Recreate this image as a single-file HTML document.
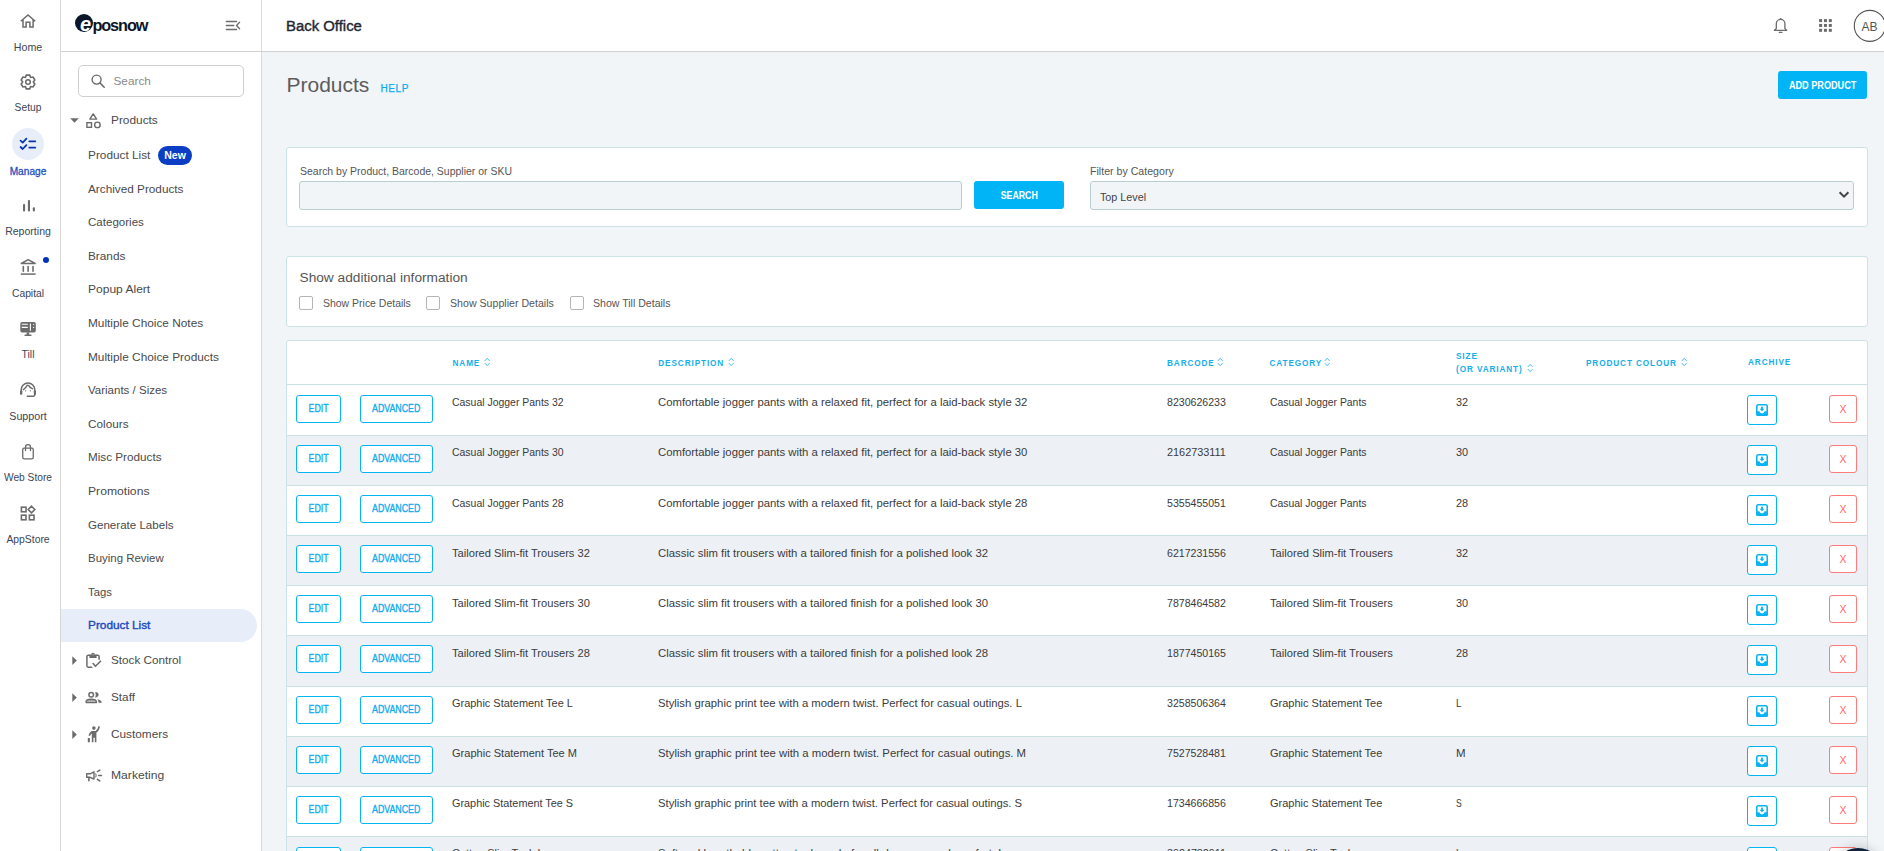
<!DOCTYPE html>
<html><head><meta charset="utf-8"><title>Back Office - Products</title>
<style>
*{box-sizing:border-box;margin:0;padding:0}
html,body{width:1884px;height:851px;overflow:hidden}
body{font-family:"Liberation Sans",sans-serif;background:#f2f5f8;position:relative;color:#333}
.a{position:absolute;white-space:nowrap}
#rail{position:absolute;left:0;top:0;width:61px;height:851px;background:#fff;border-right:1px solid #d6d6d6}
#side{position:absolute;left:61px;top:0;width:201px;height:851px;background:#fff;border-right:1px solid #dadada}
#hdr{position:absolute;left:61px;top:51px;width:1823px;height:1px;background:#d2d2d2}
#hdrw{position:absolute;left:262px;top:0;width:1622px;height:51px;background:#fff}
.rl{font-size:10.5px;color:#3a4556;width:56px;text-align:center;left:0;line-height:12px;transform-origin:50% 0}
.si{font-size:11px;color:#4a4a4a;left:88px;line-height:14px;transform-origin:0 0}
.panel{position:absolute;background:#fff;border:1px solid #cde2e4;border-radius:3px}
.th{font-size:8.2px;font-weight:bold;color:#14aeea;letter-spacing:0.9px;line-height:10px}
.td{font-size:11px;color:#3b3b3b;line-height:12px;transform-origin:0 0}
.lb{font-size:10.5px;color:#555;line-height:12px;transform-origin:0 0}
.btn{position:absolute;border:1px solid #05b4f3;border-radius:3px;background:#fff;color:#10aaf0;text-align:center}
.btn span{display:inline-block;font-size:11px;line-height:24px;transform:scaleX(.8);-webkit-text-stroke:0.35px #10aaf0}
.xb{position:absolute;border:1px solid #ff7b7b;border-radius:3px;background:#fff;color:#ff6767;font-size:10.5px;text-align:center;line-height:26px}
.row{position:absolute;left:287px;width:1580px;border-bottom:1px solid #c9e1e3}
.cb{position:absolute;width:14px;height:14px;border:1px solid #b5b5b5;border-radius:2px;background:#fff}
.sort{position:absolute;width:6px;height:9px}
</style></head>
<body>
<div id="rail"></div>
<div class="a" style="left:12px;top:128px;width:32px;height:32px;border-radius:50%;background:#e8eef9"></div>
<div class="a rl" style="top:41.1px;transform:scaleX(1.0115)">Home</div>
<div class="a rl" style="top:101.4px;transform:scaleX(0.9766)">Setup</div>
<div class="a rl" style="top:164.6px;color:#1f4fc1;-webkit-text-stroke:0.3px #1f4fc1;transform:scaleX(0.9654)">Manage</div>
<div class="a rl" style="top:225.2px;transform:scaleX(1.0042)">Reporting</div>
<div class="a rl" style="top:287.0px;transform:scaleX(0.9836)">Capital</div>
<div class="a rl" style="top:347.6px;transform:scaleX(0.9944)">Till</div>
<div class="a rl" style="top:410.3px;transform:scaleX(1.0180)">Support</div>
<div class="a rl" style="top:471.2px;transform:scaleX(0.9731)">Web Store</div>
<div class="a rl" style="top:532.8px;transform:scaleX(0.9876)">AppStore</div>
<svg class="a" style="left:0px;top:0px" width="60" height="560" viewBox="0 0 60 560"><path d="M20.8,21.2 L28,14.9 L35.2,21.2 M23,19.5 V27 H26.1 V22.2 H29.9 V27 H33.1 V19.5" fill="none" stroke="#6b6b6b" stroke-width="1.5" stroke-linejoin="miter"/><path d="M30.60,77.38 L29.70,75.11 L26.30,75.11 L25.40,77.38 L25.30,77.44 L22.88,77.08 L21.18,80.03 L22.70,81.94 L22.70,82.06 L21.18,83.97 L22.88,86.92 L25.30,86.56 L25.40,86.62 L26.30,88.89 L29.70,88.89 L30.60,86.62 L30.70,86.56 L33.12,86.92 L34.82,83.97 L33.30,82.06 L33.30,81.94 L34.82,80.03 L33.12,77.08 L30.70,77.44Z" fill="none" stroke="#6b6b6b" stroke-width="1.6" stroke-linejoin="miter"/><circle cx="28" cy="82" r="2.3" fill="none" stroke="#6b6b6b" stroke-width="1.5"/><path d="M20.6,140.7 L22.7,142.6 L26.4,138.7 M20.6,147 L22.7,149 L26.4,145.1" fill="none" stroke="#0a34b0" stroke-width="1.8" stroke-linecap="round" stroke-linejoin="round"/><path d="M29.3,141.3 H35.3 M29.3,147.6 H35.3" fill="none" stroke="#0a34b0" stroke-width="1.8" stroke-linecap="round"/><rect x="23" y="204" width="2.1" height="7.5" rx="0.9" fill="#6b6b6b"/><rect x="27.9" y="200.1" width="2.1" height="11.4" rx="0.9" fill="#6b6b6b"/><rect x="32.8" y="207.3" width="2.1" height="4.2" rx="0.9" fill="#6b6b6b"/><path d="M21.3,263.5 L28.2,259.7 L35.1,263.5 Z" fill="none" stroke="#6b6b6b" stroke-width="1.5" stroke-linejoin="round"/><path d="M23.3,266.6 V271.2 M28.1,266.6 V271.2 M33,266.6 V271.2" fill="none" stroke="#6b6b6b" stroke-width="1.6" stroke-linecap="round"/><path d="M20.8,274.1 H35.6" fill="none" stroke="#6b6b6b" stroke-width="1.5"/><circle cx="46" cy="260" r="3" fill="#0033b8"/><rect x="20.3" y="321.9" width="15.5" height="10.7" rx="1.8" fill="#6b6b6b"/><path d="M21.8,324.3 H27.8 M21.8,327.4 H27.8 M30.4,323.6 V330.8" stroke="#fff" stroke-width="1.1"/><circle cx="33.6" cy="324.3" r="0.6" fill="#fff"/><circle cx="33.6" cy="327.4" r="0.6" fill="#fff"/><rect x="26.6" y="332.4" width="2.6" height="2.5" fill="#6b6b6b"/><rect x="24.4" y="334.6" width="7.2" height="1.3" rx="0.6" fill="#6b6b6b"/><path d="M21.2,391 V389.9 A6.8,6.8 0 0 1 34.8,389.9 V394.8 Q34.8,396.2 33.4,396.2 H27.4" fill="none" stroke="#6b6b6b" stroke-width="1.5" stroke-linecap="round"/><rect x="20" y="390.4" width="2.3" height="4.3" rx="0.8" fill="#6b6b6b"/><rect x="33.8" y="390.4" width="2.2" height="4.3" rx="0.8" fill="#6b6b6b"/><path d="M23.4,389.6 Q25.6,388.4 27.3,385.2 M28.6,385.4 Q29.8,387.9 32.4,388.7" fill="none" stroke="#6b6b6b" stroke-width="1.4" stroke-linecap="round"/><circle cx="25.6" cy="390.8" r="0.65" fill="#6b6b6b"/><circle cx="30.4" cy="390.8" r="0.65" fill="#6b6b6b"/><rect x="22.75" y="448.2" width="10.5" height="10.7" rx="1.3" fill="none" stroke="#6b6b6b" stroke-width="1.3"/><path d="M25.5,450.6 V447.2 A2.5,2.5 0 0 1 30.5,447.2 V450.6" fill="none" stroke="#6b6b6b" stroke-width="1.3" stroke-linecap="round"/><rect x="21.4" y="507.2" width="4.6" height="4.6" fill="none" stroke="#6b6b6b" stroke-width="1.6"/><rect x="21.4" y="515.2" width="4.6" height="4.6" fill="none" stroke="#6b6b6b" stroke-width="1.6"/><rect x="29.4" y="515.2" width="4.6" height="4.6" fill="none" stroke="#6b6b6b" stroke-width="1.6"/><path d="M31.5,506.2 L34.8,509.5 L31.5,512.8 L28.2,509.5 Z" fill="none" stroke="#6b6b6b" stroke-width="1.6" stroke-linejoin="miter"/></svg>
<div id="side"></div>
<div id="hdrw"></div><div id="hdr"></div>
<div class="a" style="left:74.6px;top:13.9px;width:18.6px;height:18.6px;border-radius:50%;background:#0b1628"></div>
<div class="a" style="left:80px;top:13.6px;font-size:20px;font-weight:bold;font-style:italic;color:#fff;line-height:20px">e</div>
<div class="a" style="left:92.4px;top:15.2px;font-size:16.3px;font-weight:bold;color:#0b1628;letter-spacing:-1.1px;line-height:20px">posnow</div>
<div class="a si" style="top:148.4px;transform:scaleX(1.0743)">Product List</div>
<div class="a si" style="top:182.0px;transform:scaleX(1.0698)">Archived Products</div>
<div class="a si" style="top:214.9px;transform:scaleX(1.0501)">Categories</div>
<div class="a si" style="top:249.0px;transform:scaleX(1.0732)">Brands</div>
<div class="a si" style="top:281.9px;transform:scaleX(1.0934)">Popup Alert</div>
<div class="a si" style="top:316.0px;transform:scaleX(1.0764)">Multiple Choice Notes</div>
<div class="a si" style="top:349.6px;transform:scaleX(1.0761)">Multiple Choice Products</div>
<div class="a si" style="top:383.2px;transform:scaleX(1.0461)">Variants / Sizes</div>
<div class="a si" style="top:416.8px;transform:scaleX(1.0686)">Colours</div>
<div class="a si" style="top:450.4px;transform:scaleX(1.0640)">Misc Products</div>
<div class="a si" style="top:484.0px;transform:scaleX(1.1048)">Promotions</div>
<div class="a si" style="top:517.6px;transform:scaleX(1.0514)">Generate Labels</div>
<div class="a si" style="top:551.2px;transform:scaleX(1.0403)">Buying Review</div>
<div class="a si" style="top:585.0px;transform:scaleX(1.0278)">Tags</div>
<div class="a" style="left:158px;top:146px;width:34px;height:19px;border-radius:10px;background:#0b3ec4;color:#fff;font-size:10.5px;font-weight:bold;text-align:center;line-height:19px">New</div>
<div class="a" style="left:61px;top:609px;width:196px;height:33px;border-radius:0 17px 17px 0;background:#e8eef9"></div>
<div class="a si" style="top:617.9px;color:#1a48c0;-webkit-text-stroke:0.35px #1a48c0;transform:scaleX(1.0743)">Product List</div>
<div class="a si" style="left:110.5px;top:113.0px;transform:scaleX(1.0776)">Products</div>
<div class="a si" style="left:110.5px;top:653.4px;transform:scaleX(1.0632)">Stock Control</div>
<div class="a si" style="left:110.5px;top:690.0px;transform:scaleX(1.0694)">Staff</div>
<div class="a si" style="left:110.5px;top:727.0px;transform:scaleX(1.0723)">Customers</div>
<div class="a si" style="left:110.5px;top:768.4px;transform:scaleX(1.1025)">Marketing</div>
<div class="a" style="left:78px;top:65px;width:166px;height:32px;border:1px solid #cfcfcf;border-radius:5px;background:#fff"></div>
<div class="a" style="left:113.5px;top:74px;font-size:11.8px;line-height:14px;color:#8a8a8a">Search</div>
<svg class="a" style="left:0px;top:0px" width="262" height="800" viewBox="0 0 262 800"><path d="M70.2,118.3 H78.8 L74.5,122.7 Z" fill="#6b6b6b"/><path d="M72.3,656.2 V665.0 L76.8,660.6 Z" fill="#6b6b6b"/><path d="M72.3,693.2 V702.0 L76.8,697.6 Z" fill="#6b6b6b"/><path d="M72.3,730.2 V739.0 L76.8,734.6 Z" fill="#6b6b6b"/><path d="M93.2,113.9 L96.6,119.1 H89.8 Z" fill="none" stroke="#6b6b6b" stroke-width="1.4" stroke-linejoin="round"/><rect x="86.9" y="122.7" width="4.6" height="4.6" fill="none" stroke="#6b6b6b" stroke-width="1.4"/><circle cx="97.4" cy="124.9" r="2.75" fill="none" stroke="#6b6b6b" stroke-width="1.4"/><path d="M91.7,667.2 H88.3 Q86.9,667.2 86.9,665.8 V656.6 Q86.9,655.2 88.3,655.2 H89.6 M96.4,655.2 H97.7 Q99.1,655.2 99.1,656.6 V659.3" fill="none" stroke="#6b6b6b" stroke-width="1.5" stroke-linecap="round"/><path d="M89.4,657.9 V654.6 H91.2 A1.8,1.8 0 0 1 94.8,654.6 H96.6 V657.9 Z" fill="#6b6b6b"/><circle cx="93" cy="654.7" r="0.6" fill="#ccc"/><path d="M93.1,663.5 L95.5,666.2 L100.5,661.2" fill="none" stroke="#6b6b6b" stroke-width="1.6" stroke-linecap="round"/><circle cx="91.2" cy="694.7" r="2.3" fill="none" stroke="#6b6b6b" stroke-width="1.5"/><path d="M95.2,692 Q98.6,692.4 98.6,694.7 Q98.6,697 95.2,697.4 Q96.3,694.7 95.2,692 Z" fill="#6b6b6b"/><path d="M86.1,702.6 V701.6 Q86.3,699.4 91.2,699.3 Q96.1,699.4 96.4,701.6 V702.6 Z" fill="#b8b8b8" stroke="#6b6b6b" stroke-width="1.4" stroke-linejoin="round"/><path d="M97.3,699.2 Q101.6,699.9 101.8,702.8 H98.6 Q98.6,700.6 97.3,699.2 Z" fill="#6b6b6b"/><circle cx="93.9" cy="728.1" r="1.8" fill="#6b6b6b"/><path d="M91.6,730.9 H95.6 Q97.6,730 98.5,726 L99.9,726.4 Q99.1,731 96.4,732.6 V742.2 H94.8 V737.7 H93.4 V742.2 H91.8 V733.6 Q90.6,734.4 89.9,736 L88.5,735.6 Q89.3,732 91.6,730.9 Z" fill="#6b6b6b"/><rect x="87.8" y="738" width="2.1" height="4.3" rx="0.5" fill="#6b6b6b"/><path d="M86.7,773.8 H90.1 L94,771.8 V779 L90.1,777.3 H86.7 Z" fill="none" stroke="#6b6b6b" stroke-width="1.4" stroke-linejoin="round"/><path d="M88.9,777.6 V780.8" stroke="#6b6b6b" stroke-width="1.6" stroke-linecap="round"/><path d="M95.3,773.4 Q97.1,775.4 95.3,777.4" fill="none" stroke="#999" stroke-width="1.3"/><path d="M97.4,771.6 L99.8,770.1 M98.7,775.5 H101.5 M97.4,779.4 L99.8,780.9" stroke="#6b6b6b" stroke-width="1.5" stroke-linecap="round"/><path d="M226.3,21.5 H236.6 M226.3,25.5 H233.8 M226.3,29.5 H236.6 M239.6,22.3 L236.5,25.5 L239.6,28.7" fill="none" stroke="#6b6b6b" stroke-width="1.3" stroke-linecap="round" stroke-linejoin="round"/><circle cx="96.6" cy="79.6" r="4.5" fill="none" stroke="#6b6b6b" stroke-width="1.4"/><path d="M99.9,82.9 L104.2,87.2" stroke="#6b6b6b" stroke-width="1.5" stroke-linecap="round"/></svg>
<div class="a" style="left:286px;top:17px;font-size:14.9px;color:#1f2733;line-height:18px;-webkit-text-stroke:0.4px #1f2733">Back Office</div>
<svg class="a" style="left:1700px;top:0px" width="184" height="52" viewBox="1700 0 184 52"><path d="M1774.4,30.3 H1786.7 L1784.9,28.6 V23.7 A4.3,4.3 0 0 0 1776.3,23.7 V28.6 Z" fill="none" stroke="#6b6b6b" stroke-width="1.3" stroke-linejoin="round"/><circle cx="1780.6" cy="18.9" r="1" fill="#6b6b6b"/><path d="M1779.2,32.3 H1782" stroke="#6b6b6b" stroke-width="1.2" stroke-linecap="round"/><rect x="1819.10" y="19.10" width="3" height="3" fill="#6b6b6b"/><rect x="1819.10" y="23.95" width="3" height="3" fill="#6b6b6b"/><rect x="1819.10" y="28.80" width="3" height="3" fill="#6b6b6b"/><rect x="1823.95" y="19.10" width="3" height="3" fill="#6b6b6b"/><rect x="1823.95" y="23.95" width="3" height="3" fill="#6b6b6b"/><rect x="1823.95" y="28.80" width="3" height="3" fill="#6b6b6b"/><rect x="1828.80" y="19.10" width="3" height="3" fill="#6b6b6b"/><rect x="1828.80" y="23.95" width="3" height="3" fill="#6b6b6b"/><rect x="1828.80" y="28.80" width="3" height="3" fill="#6b6b6b"/><circle cx="1869.8" cy="25.9" r="15.5" fill="none" stroke="#555" stroke-width="1.1"/></svg>
<div class="a" style="left:1861.5px;top:20px;font-size:12px;color:#555;line-height:14px">AB</div>
<div class="a" style="left:286.5px;top:72.5px;font-size:21px;color:#5c5c5c;line-height:24px">Products</div>
<div class="a" style="left:380.5px;top:82.5px;font-size:10px;color:#08aeef;line-height:12px;letter-spacing:0.6px;-webkit-text-stroke:0.25px #08aeef">HELP</div>
<div class="a" style="left:1778px;top:71px;width:89px;height:28px;border-radius:3px;background:#00b4f6;color:#fff;text-align:center"><span style="display:inline-block;font-size:11px;font-weight:bold;line-height:28px;transform:scaleX(.83)">ADD PRODUCT</span></div>
<div class="panel" style="left:286px;top:147px;width:1582px;height:80px"></div>
<div class="a lb" style="left:299.5px;top:165.2px;transform:scaleX(0.9979)">Search by Product, Barcode, Supplier or SKU</div>
<div class="a" style="left:299px;top:181px;width:663px;height:29px;border:1px solid #b7cfd1;border-radius:3px;background:#f2f5f8"></div>
<div class="a" style="left:974px;top:181px;width:90px;height:28px;border-radius:3px;background:#00b4f6;color:#fff;text-align:center"><span style="display:inline-block;font-size:11px;font-weight:bold;line-height:28px;transform:scaleX(.8)">SEARCH</span></div>
<div class="a lb" style="left:1089.5px;top:165.2px;transform:scaleX(1.0110)">Filter by Category</div>
<div class="a" style="left:1090px;top:181px;width:764px;height:29px;border:1px solid #b7cfd1;border-radius:3px;background:#f2f5f8"></div>
<div class="a lb" style="left:1100px;top:190.6px;color:#444;transform:scaleX(1.0238)">Top Level</div>
<svg class="a" style="left:1838px;top:190px" width="12" height="10" viewBox="0 0 12 10"><path d="M1.6,2.2 L6,6.6 L10.4,2.2" fill="none" stroke="#444" stroke-width="2"/></svg>
<div class="panel" style="left:286px;top:256px;width:1582px;height:71px"></div>
<div class="a" style="left:299.5px;top:270px;font-size:13.7px;color:#555;line-height:16px">Show additional information</div>
<div class="cb" style="left:299px;top:296px"></div>
<div class="a lb" style="left:322.5px;top:297px;transform:scaleX(0.9969)">Show Price Details</div>
<div class="cb" style="left:426px;top:296px"></div>
<div class="a lb" style="left:449.5px;top:297px;transform:scaleX(1.0108)">Show Supplier Details</div>
<div class="cb" style="left:570px;top:296px"></div>
<div class="a lb" style="left:593px;top:297px;transform:scaleX(1.0061)">Show Till Details</div>
<div class="panel" style="left:286px;top:340px;width:1582px;height:600px;border-radius:3px 3px 0 0"></div>
<div class="a" style="left:287px;top:384px;width:1580px;height:1px;background:#c9e1e3"></div>
<div class="a th" style="left:452.5px;top:359px">NAME</div>
<svg class="a" style="left:484px;top:357.2px" width="7" height="10" viewBox="0 0 7 10"><path d="M1.1,3.6 L3.2,1.4 L5.3,3.6 M1.1,6.4 L3.2,8.6 L5.3,6.4" fill="none" stroke="#2eb8ee" stroke-width="0.95" stroke-linecap="round" stroke-linejoin="round"/></svg>
<div class="a th" style="left:658.3px;top:359px">DESCRIPTION</div>
<svg class="a" style="left:727.9px;top:357.2px" width="7" height="10" viewBox="0 0 7 10"><path d="M1.1,3.6 L3.2,1.4 L5.3,3.6 M1.1,6.4 L3.2,8.6 L5.3,6.4" fill="none" stroke="#2eb8ee" stroke-width="0.95" stroke-linecap="round" stroke-linejoin="round"/></svg>
<div class="a th" style="left:1167px;top:359px">BARCODE</div>
<svg class="a" style="left:1217.2px;top:357.2px" width="7" height="10" viewBox="0 0 7 10"><path d="M1.1,3.6 L3.2,1.4 L5.3,3.6 M1.1,6.4 L3.2,8.6 L5.3,6.4" fill="none" stroke="#2eb8ee" stroke-width="0.95" stroke-linecap="round" stroke-linejoin="round"/></svg>
<div class="a th" style="left:1269.5px;top:359px">CATEGORY</div>
<svg class="a" style="left:1323.6px;top:357.2px" width="7" height="10" viewBox="0 0 7 10"><path d="M1.1,3.6 L3.2,1.4 L5.3,3.6 M1.1,6.4 L3.2,8.6 L5.3,6.4" fill="none" stroke="#2eb8ee" stroke-width="0.95" stroke-linecap="round" stroke-linejoin="round"/></svg>
<div class="a th" style="left:1586px;top:359px">PRODUCT COLOUR</div>
<svg class="a" style="left:1681.2px;top:357.2px" width="7" height="10" viewBox="0 0 7 10"><path d="M1.1,3.6 L3.2,1.4 L5.3,3.6 M1.1,6.4 L3.2,8.6 L5.3,6.4" fill="none" stroke="#2eb8ee" stroke-width="0.95" stroke-linecap="round" stroke-linejoin="round"/></svg>
<div class="a th" style="left:1456px;top:352px">SIZE</div>
<div class="a th" style="left:1456px;top:365px">(OR VARIANT)</div>
<svg class="a" style="left:1527px;top:363px" width="7" height="10" viewBox="0 0 7 10"><path d="M1.1,3.6 L3.2,1.4 L5.3,3.6 M1.1,6.4 L3.2,8.6 L5.3,6.4" fill="none" stroke="#2eb8ee" stroke-width="0.95" stroke-linecap="round" stroke-linejoin="round"/></svg>
<div class="a th" style="left:1748px;top:358px">ARCHIVE</div>
<div class="row" style="top:385px;height:51px;background:#fff"></div>
<div class="btn" style="left:296px;top:395px;width:45px;height:28px"><span>EDIT</span></div>
<div class="btn" style="left:360px;top:395px;width:73px;height:28px"><span>ADVANCED</span></div>
<div class="a td" style="left:452px;top:396.30px;transform:scaleX(0.9505)">Casual Jogger Pants 32</div>
<div class="a td" style="left:658px;top:396.30px;transform:scaleX(1.0293)">Comfortable jogger pants with a relaxed fit, perfect for a laid-back style 32</div>
<div class="a td" style="left:1167px;top:396.30px;transform:scaleX(0.9627)">8230626233</div>
<div class="a td" style="left:1269.5px;top:396.30px;transform:scaleX(0.9448)">Casual Jogger Pants</div>
<div class="a td" style="left:1456px;top:396.30px;transform:scaleX(0.9907)">32</div>
<div class="btn" style="left:1747px;top:395px;width:30px;height:30px"><svg width="12" height="12" viewBox="0 0 11.4 11.4" style="position:absolute;left:8.3px;top:8.3px"><rect x="0.75" y="0.75" width="9.9" height="9.9" rx="1.4" fill="none" stroke="#0bb3f2" stroke-width="1.5"/><path fill="#0bb3f2" d="M0,7 H3.2 Q3.5,9 5.7,9 Q7.9,9 8.2,7 H11.4 V10 Q11.4,11.4 10,11.4 H1.4 Q0,11.4 0,10 Z"/><rect x="4.85" y="2.5" width="1.7" height="2.4" fill="#0bb3f2"/><path fill="#0bb3f2" d="M3.3,4.5 H8.1 L5.7,7 Z"/></svg></div>
<div class="xb" style="left:1829px;top:395px;width:28px;height:28px">X</div>
<div class="row" style="top:436px;height:50px;background:#edf1f5"></div>
<div class="btn" style="left:296px;top:445px;width:45px;height:28px"><span>EDIT</span></div>
<div class="btn" style="left:360px;top:445px;width:73px;height:28px"><span>ADVANCED</span></div>
<div class="a td" style="left:452px;top:446.43px;transform:scaleX(0.9505)">Casual Jogger Pants 30</div>
<div class="a td" style="left:658px;top:446.43px;transform:scaleX(1.0293)">Comfortable jogger pants with a relaxed fit, perfect for a laid-back style 30</div>
<div class="a td" style="left:1167px;top:446.43px;transform:scaleX(0.9891)">2162733111</div>
<div class="a td" style="left:1269.5px;top:446.43px;transform:scaleX(0.9448)">Casual Jogger Pants</div>
<div class="a td" style="left:1456px;top:446.43px;transform:scaleX(0.9907)">30</div>
<div class="btn" style="left:1747px;top:445px;width:30px;height:30px"><svg width="12" height="12" viewBox="0 0 11.4 11.4" style="position:absolute;left:8.3px;top:8.3px"><rect x="0.75" y="0.75" width="9.9" height="9.9" rx="1.4" fill="none" stroke="#0bb3f2" stroke-width="1.5"/><path fill="#0bb3f2" d="M0,7 H3.2 Q3.5,9 5.7,9 Q7.9,9 8.2,7 H11.4 V10 Q11.4,11.4 10,11.4 H1.4 Q0,11.4 0,10 Z"/><rect x="4.85" y="2.5" width="1.7" height="2.4" fill="#0bb3f2"/><path fill="#0bb3f2" d="M3.3,4.5 H8.1 L5.7,7 Z"/></svg></div>
<div class="xb" style="left:1829px;top:445px;width:28px;height:28px">X</div>
<div class="row" style="top:486px;height:50px;background:#fff"></div>
<div class="btn" style="left:296px;top:495px;width:45px;height:28px"><span>EDIT</span></div>
<div class="btn" style="left:360px;top:495px;width:73px;height:28px"><span>ADVANCED</span></div>
<div class="a td" style="left:452px;top:496.55px;transform:scaleX(0.9505)">Casual Jogger Pants 28</div>
<div class="a td" style="left:658px;top:496.55px;transform:scaleX(1.0293)">Comfortable jogger pants with a relaxed fit, perfect for a laid-back style 28</div>
<div class="a td" style="left:1167px;top:496.55px;transform:scaleX(0.9627)">5355455051</div>
<div class="a td" style="left:1269.5px;top:496.55px;transform:scaleX(0.9448)">Casual Jogger Pants</div>
<div class="a td" style="left:1456px;top:496.55px;transform:scaleX(0.9907)">28</div>
<div class="btn" style="left:1747px;top:495px;width:30px;height:30px"><svg width="12" height="12" viewBox="0 0 11.4 11.4" style="position:absolute;left:8.3px;top:8.3px"><rect x="0.75" y="0.75" width="9.9" height="9.9" rx="1.4" fill="none" stroke="#0bb3f2" stroke-width="1.5"/><path fill="#0bb3f2" d="M0,7 H3.2 Q3.5,9 5.7,9 Q7.9,9 8.2,7 H11.4 V10 Q11.4,11.4 10,11.4 H1.4 Q0,11.4 0,10 Z"/><rect x="4.85" y="2.5" width="1.7" height="2.4" fill="#0bb3f2"/><path fill="#0bb3f2" d="M3.3,4.5 H8.1 L5.7,7 Z"/></svg></div>
<div class="xb" style="left:1829px;top:495px;width:28px;height:28px">X</div>
<div class="row" style="top:536px;height:50px;background:#edf1f5"></div>
<div class="btn" style="left:296px;top:545px;width:45px;height:28px"><span>EDIT</span></div>
<div class="btn" style="left:360px;top:545px;width:73px;height:28px"><span>ADVANCED</span></div>
<div class="a td" style="left:452px;top:546.67px;transform:scaleX(1.0116)">Tailored Slim-fit Trousers 32</div>
<div class="a td" style="left:658px;top:546.67px;transform:scaleX(1.0321)">Classic slim fit trousers with a tailored finish for a polished look 32</div>
<div class="a td" style="left:1167px;top:546.67px;transform:scaleX(0.9627)">6217231556</div>
<div class="a td" style="left:1269.5px;top:546.67px;transform:scaleX(1.0138)">Tailored Slim-fit Trousers</div>
<div class="a td" style="left:1456px;top:546.67px;transform:scaleX(0.9907)">32</div>
<div class="btn" style="left:1747px;top:545px;width:30px;height:30px"><svg width="12" height="12" viewBox="0 0 11.4 11.4" style="position:absolute;left:8.3px;top:8.3px"><rect x="0.75" y="0.75" width="9.9" height="9.9" rx="1.4" fill="none" stroke="#0bb3f2" stroke-width="1.5"/><path fill="#0bb3f2" d="M0,7 H3.2 Q3.5,9 5.7,9 Q7.9,9 8.2,7 H11.4 V10 Q11.4,11.4 10,11.4 H1.4 Q0,11.4 0,10 Z"/><rect x="4.85" y="2.5" width="1.7" height="2.4" fill="#0bb3f2"/><path fill="#0bb3f2" d="M3.3,4.5 H8.1 L5.7,7 Z"/></svg></div>
<div class="xb" style="left:1829px;top:545px;width:28px;height:28px">X</div>
<div class="row" style="top:586px;height:50px;background:#fff"></div>
<div class="btn" style="left:296px;top:595px;width:45px;height:28px"><span>EDIT</span></div>
<div class="btn" style="left:360px;top:595px;width:73px;height:28px"><span>ADVANCED</span></div>
<div class="a td" style="left:452px;top:596.80px;transform:scaleX(1.0116)">Tailored Slim-fit Trousers 30</div>
<div class="a td" style="left:658px;top:596.80px;transform:scaleX(1.0321)">Classic slim fit trousers with a tailored finish for a polished look 30</div>
<div class="a td" style="left:1167px;top:596.80px;transform:scaleX(0.9627)">7878464582</div>
<div class="a td" style="left:1269.5px;top:596.80px;transform:scaleX(1.0138)">Tailored Slim-fit Trousers</div>
<div class="a td" style="left:1456px;top:596.80px;transform:scaleX(0.9907)">30</div>
<div class="btn" style="left:1747px;top:595px;width:30px;height:30px"><svg width="12" height="12" viewBox="0 0 11.4 11.4" style="position:absolute;left:8.3px;top:8.3px"><rect x="0.75" y="0.75" width="9.9" height="9.9" rx="1.4" fill="none" stroke="#0bb3f2" stroke-width="1.5"/><path fill="#0bb3f2" d="M0,7 H3.2 Q3.5,9 5.7,9 Q7.9,9 8.2,7 H11.4 V10 Q11.4,11.4 10,11.4 H1.4 Q0,11.4 0,10 Z"/><rect x="4.85" y="2.5" width="1.7" height="2.4" fill="#0bb3f2"/><path fill="#0bb3f2" d="M3.3,4.5 H8.1 L5.7,7 Z"/></svg></div>
<div class="xb" style="left:1829px;top:595px;width:28px;height:28px">X</div>
<div class="row" style="top:636px;height:51px;background:#edf1f5"></div>
<div class="btn" style="left:296px;top:645px;width:45px;height:28px"><span>EDIT</span></div>
<div class="btn" style="left:360px;top:645px;width:73px;height:28px"><span>ADVANCED</span></div>
<div class="a td" style="left:452px;top:646.92px;transform:scaleX(1.0116)">Tailored Slim-fit Trousers 28</div>
<div class="a td" style="left:658px;top:646.92px;transform:scaleX(1.0321)">Classic slim fit trousers with a tailored finish for a polished look 28</div>
<div class="a td" style="left:1167px;top:646.92px;transform:scaleX(0.9627)">1877450165</div>
<div class="a td" style="left:1269.5px;top:646.92px;transform:scaleX(1.0138)">Tailored Slim-fit Trousers</div>
<div class="a td" style="left:1456px;top:646.92px;transform:scaleX(0.9907)">28</div>
<div class="btn" style="left:1747px;top:645px;width:30px;height:30px"><svg width="12" height="12" viewBox="0 0 11.4 11.4" style="position:absolute;left:8.3px;top:8.3px"><rect x="0.75" y="0.75" width="9.9" height="9.9" rx="1.4" fill="none" stroke="#0bb3f2" stroke-width="1.5"/><path fill="#0bb3f2" d="M0,7 H3.2 Q3.5,9 5.7,9 Q7.9,9 8.2,7 H11.4 V10 Q11.4,11.4 10,11.4 H1.4 Q0,11.4 0,10 Z"/><rect x="4.85" y="2.5" width="1.7" height="2.4" fill="#0bb3f2"/><path fill="#0bb3f2" d="M3.3,4.5 H8.1 L5.7,7 Z"/></svg></div>
<div class="xb" style="left:1829px;top:645px;width:28px;height:28px">X</div>
<div class="row" style="top:687px;height:50px;background:#fff"></div>
<div class="btn" style="left:296px;top:696px;width:45px;height:28px"><span>EDIT</span></div>
<div class="btn" style="left:360px;top:696px;width:73px;height:28px"><span>ADVANCED</span></div>
<div class="a td" style="left:452px;top:697.05px;transform:scaleX(0.9950)">Graphic Statement Tee L</div>
<div class="a td" style="left:658px;top:697.05px;transform:scaleX(1.0281)">Stylish graphic print tee with a modern twist. Perfect for casual outings. L</div>
<div class="a td" style="left:1167px;top:697.05px;transform:scaleX(0.9627)">3258506364</div>
<div class="a td" style="left:1269.5px;top:697.05px;transform:scaleX(1.0001)">Graphic Statement Tee</div>
<div class="a td" style="left:1456px;top:697.05px;transform:scaleX(0.8993)">L</div>
<div class="btn" style="left:1747px;top:696px;width:30px;height:30px"><svg width="12" height="12" viewBox="0 0 11.4 11.4" style="position:absolute;left:8.3px;top:8.3px"><rect x="0.75" y="0.75" width="9.9" height="9.9" rx="1.4" fill="none" stroke="#0bb3f2" stroke-width="1.5"/><path fill="#0bb3f2" d="M0,7 H3.2 Q3.5,9 5.7,9 Q7.9,9 8.2,7 H11.4 V10 Q11.4,11.4 10,11.4 H1.4 Q0,11.4 0,10 Z"/><rect x="4.85" y="2.5" width="1.7" height="2.4" fill="#0bb3f2"/><path fill="#0bb3f2" d="M3.3,4.5 H8.1 L5.7,7 Z"/></svg></div>
<div class="xb" style="left:1829px;top:696px;width:28px;height:28px">X</div>
<div class="row" style="top:737px;height:50px;background:#edf1f5"></div>
<div class="btn" style="left:296px;top:746px;width:45px;height:28px"><span>EDIT</span></div>
<div class="btn" style="left:360px;top:746px;width:73px;height:28px"><span>ADVANCED</span></div>
<div class="a td" style="left:452px;top:747.17px;transform:scaleX(1.0033)">Graphic Statement Tee M</div>
<div class="a td" style="left:658px;top:747.17px;transform:scaleX(1.0308)">Stylish graphic print tee with a modern twist. Perfect for casual outings. M</div>
<div class="a td" style="left:1167px;top:747.17px;transform:scaleX(0.9627)">7527528481</div>
<div class="a td" style="left:1269.5px;top:747.17px;transform:scaleX(1.0001)">Graphic Statement Tee</div>
<div class="a td" style="left:1456px;top:747.17px;transform:scaleX(1.0444)">M</div>
<div class="btn" style="left:1747px;top:746px;width:30px;height:30px"><svg width="12" height="12" viewBox="0 0 11.4 11.4" style="position:absolute;left:8.3px;top:8.3px"><rect x="0.75" y="0.75" width="9.9" height="9.9" rx="1.4" fill="none" stroke="#0bb3f2" stroke-width="1.5"/><path fill="#0bb3f2" d="M0,7 H3.2 Q3.5,9 5.7,9 Q7.9,9 8.2,7 H11.4 V10 Q11.4,11.4 10,11.4 H1.4 Q0,11.4 0,10 Z"/><rect x="4.85" y="2.5" width="1.7" height="2.4" fill="#0bb3f2"/><path fill="#0bb3f2" d="M3.3,4.5 H8.1 L5.7,7 Z"/></svg></div>
<div class="xb" style="left:1829px;top:746px;width:28px;height:28px">X</div>
<div class="row" style="top:787px;height:50px;background:#fff"></div>
<div class="btn" style="left:296px;top:796px;width:45px;height:28px"><span>EDIT</span></div>
<div class="btn" style="left:360px;top:796px;width:73px;height:28px"><span>ADVANCED</span></div>
<div class="a td" style="left:452px;top:797.30px;transform:scaleX(0.9869)">Graphic Statement Tee S</div>
<div class="a td" style="left:658px;top:797.30px;transform:scaleX(1.0251)">Stylish graphic print tee with a modern twist. Perfect for casual outings. S</div>
<div class="a td" style="left:1167px;top:797.30px;transform:scaleX(0.9627)">1734666856</div>
<div class="a td" style="left:1269.5px;top:797.30px;transform:scaleX(1.0001)">Graphic Statement Tee</div>
<div class="a td" style="left:1456px;top:797.30px;transform:scaleX(0.7788)">S</div>
<div class="btn" style="left:1747px;top:796px;width:30px;height:30px"><svg width="12" height="12" viewBox="0 0 11.4 11.4" style="position:absolute;left:8.3px;top:8.3px"><rect x="0.75" y="0.75" width="9.9" height="9.9" rx="1.4" fill="none" stroke="#0bb3f2" stroke-width="1.5"/><path fill="#0bb3f2" d="M0,7 H3.2 Q3.5,9 5.7,9 Q7.9,9 8.2,7 H11.4 V10 Q11.4,11.4 10,11.4 H1.4 Q0,11.4 0,10 Z"/><rect x="4.85" y="2.5" width="1.7" height="2.4" fill="#0bb3f2"/><path fill="#0bb3f2" d="M3.3,4.5 H8.1 L5.7,7 Z"/></svg></div>
<div class="xb" style="left:1829px;top:796px;width:28px;height:28px">X</div>
<div class="row" style="top:837px;height:50px;background:#edf1f5"></div>
<div class="btn" style="left:296px;top:847px;width:45px;height:28px"><span>EDIT</span></div>
<div class="btn" style="left:360px;top:847px;width:73px;height:28px"><span>ADVANCED</span></div>
<div class="a td" style="left:452px;top:847.42px;transform:scaleX(0.9949)">Cotton Slim Tank L</div>
<div class="a td" style="left:658px;top:847.42px;transform:scaleX(1.0342)">Soft and breathable cotton tank made for all-day wear and comfort. L</div>
<div class="a td" style="left:1167px;top:847.42px;transform:scaleX(0.9757)">3924782911</div>
<div class="a td" style="left:1269.5px;top:847.42px;transform:scaleX(1.0028)">Cotton Slim Tank</div>
<div class="a td" style="left:1456px;top:847.42px;transform:scaleX(0.8993)">L</div>
<div class="btn" style="left:1747px;top:847px;width:30px;height:30px"><svg width="12" height="12" viewBox="0 0 11.4 11.4" style="position:absolute;left:8.3px;top:8.3px"><rect x="0.75" y="0.75" width="9.9" height="9.9" rx="1.4" fill="none" stroke="#0bb3f2" stroke-width="1.5"/><path fill="#0bb3f2" d="M0,7 H3.2 Q3.5,9 5.7,9 Q7.9,9 8.2,7 H11.4 V10 Q11.4,11.4 10,11.4 H1.4 Q0,11.4 0,10 Z"/><rect x="4.85" y="2.5" width="1.7" height="2.4" fill="#0bb3f2"/><path fill="#0bb3f2" d="M3.3,4.5 H8.1 L5.7,7 Z"/></svg></div>
<div class="xb" style="left:1829px;top:847px;width:28px;height:28px">X</div>
<div class="a" style="left:1833.5px;top:847.5px;width:48px;height:48px;border-radius:50%;background:#0f223d;box-shadow:0 0 12px rgba(0,0,0,0.22)"></div>

</body></html>
